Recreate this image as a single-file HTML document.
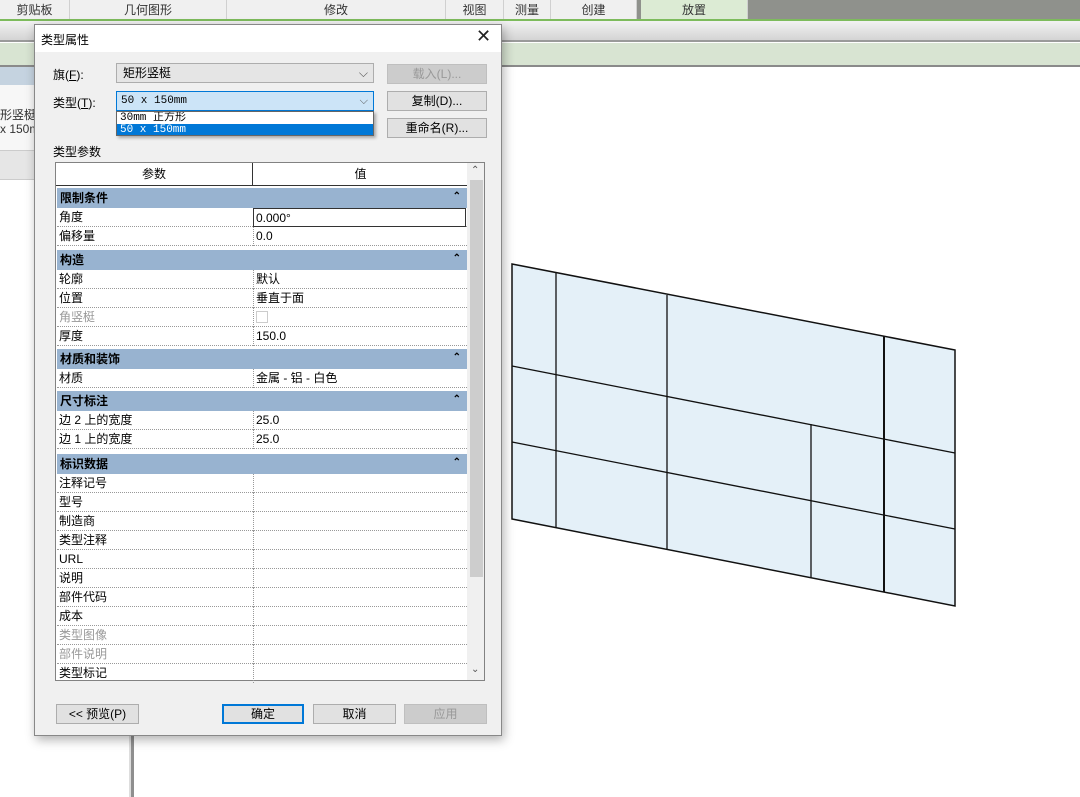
<!DOCTYPE html>
<html><head><meta charset="utf-8"><style>
*{box-sizing:border-box;margin:0;padding:0}
body{width:1080px;height:797px;position:relative;overflow:hidden;background:#fff;font-family:"Liberation Sans","Noto Sans CJK SC",sans-serif;font-size:12px;color:#000}
.a{position:absolute}
.tab{position:absolute;top:0;height:19px;background:#f0f0f0;border-right:1px solid #d0d0d0;text-align:center;line-height:20px;font-size:12px;color:#333}
.btn{position:absolute;height:20px;background:#e1e1e1;border:1px solid #adadad;text-align:center;line-height:18px;font-size:12px}
.g{position:absolute;left:57px;width:410px;height:20px;background:#98b3d0;font-weight:bold;line-height:20px;padding-left:3px;font-size:12px}
.g:after{content:"⌃";position:absolute;right:6px;top:-1px;font-size:10px;font-weight:bold}
.r{position:absolute;left:57px;width:410px;height:19px;background:#fff;border-bottom:1px dotted #999;line-height:19px;font-size:12px}
.r span{position:absolute;left:2px}
.r i{position:absolute;left:196px;top:0;height:19px;border-left:1px dotted #999;font-style:normal;padding-left:2px}
.dis{color:#999}
</style></head><body>
<div class="a" style="left:0;top:0;width:1080px;height:19px;background:#8f918c"></div>
<div class="tab" style="left:0;width:70px">剪贴板</div>
<div class="tab" style="left:70px;width:157px">几何图形</div>
<div class="tab" style="left:227px;width:219px">修改</div>
<div class="tab" style="left:446px;width:58px">视图</div>
<div class="tab" style="left:504px;width:47px">测量</div>
<div class="tab" style="left:551px;width:86px">创建</div>
<div class="a" style="left:637px;top:0;width:4px;height:19px;background:#8f918c"></div>
<div class="tab" style="left:641px;width:107px;background:#dcebd4">放置</div>
<div class="a" style="left:0;top:19px;width:1080px;height:2px;background:#7dbb5c"></div>
<div class="a" style="left:0;top:21px;width:1080px;height:21px;background:linear-gradient(#f2f2f2,#d4d4d4);border-bottom:2px solid #9a9a9a"></div>
<div class="a" style="left:0;top:43px;width:1080px;height:24px;background:#d8e4d2;border-bottom:2px solid #8a8a8a"></div>
<div class="a" style="left:0;top:67px;width:131px;height:18px;background:#c5d3e0"></div>
<div class="a" style="left:0;top:85px;width:131px;height:65px;background:#f7f7f7"></div>
<div class="a" style="left:0;top:106px;font-size:12px;color:#333">形竖梃</div>
<div class="a" style="left:0;top:122px;font-size:12px;color:#333">x 150m</div>
<div class="a" style="left:0;top:150px;width:131px;height:30px;background:#e6e6e6;border-top:1px solid #ccc;border-bottom:1px solid #ccc"></div>
<div class="a" style="left:129px;top:67px;width:2px;height:730px;background:#ddd"></div>
<div class="a" style="left:131px;top:67px;width:3px;height:730px;background:#8f8f8f"></div>
<svg class="a" style="left:0;top:0" width="1080" height="797">
<polygon points="512,264 955,350 955,606 512,519" fill="#e4f0f8" stroke="#111" stroke-width="1.5"/>
<g stroke="#111" stroke-width="1.3" fill="none">
<line x1="512" y1="366" x2="955" y2="453"/>
<line x1="512" y1="442" x2="955" y2="529"/>
<line x1="556" y1="273" x2="556" y2="528"/>
<line x1="667" y1="295" x2="667" y2="549"/>
<line x1="811" y1="424" x2="811" y2="578"/>
<line x1="884" y1="336" x2="884" y2="592" stroke-width="2"/>
</g></svg>
<div class="a" style="left:34px;top:24px;width:468px;height:712px;background:#f0f0f0;border:1px solid #888;box-shadow:2px 4px 10px rgba(0,0,0,.3)"></div>
<div class="a" style="left:35px;top:25px;width:466px;height:27px;background:#fff"></div>
<div class="a" style="left:41px;top:31px;font-size:12px">类型属性</div>
<div class="a" style="left:476px;top:26px;font-size:18px;color:#222">✕</div>
<div class="a" style="left:53px;top:66px">旗(<u>F</u>):</div>
<div class="a" style="left:53px;top:94px">类型(<u>T</u>):</div>
<div class="a" style="left:116px;top:63px;width:258px;height:20px;background:#e5e5e5;border:1px solid #adadad;line-height:18px;padding-left:6px">矩形竖梃<span style="position:absolute;right:5px;color:#555">⌵</span></div>
<div class="a" style="left:116px;top:91px;width:258px;height:20px;background:#cce4f7;border:1px solid #0078d7;line-height:18px;padding-left:4px;font-family:'Liberation Mono',monospace;font-size:11px">50 x 150mm<span style="position:absolute;right:5px;color:#555;font-family:'Liberation Sans'">⌵</span></div>
<div class="a" style="left:116px;top:111px;width:258px;height:25px;background:#fff;border:1px solid #666;box-shadow:2px 2px 3px rgba(0,0,0,.3);overflow:hidden">
<div style="position:absolute;left:3px;top:0;height:12px;font-family:'Liberation Mono','Noto Sans CJK SC',monospace;font-size:11px;line-height:12px;white-space:nowrap">30mm 正方形</div>
<div style="position:absolute;left:0;top:12px;width:256px;height:12px;background:#0078d7;color:#fff;font-family:'Liberation Mono',monospace;font-size:11px;line-height:12px;padding-left:3px">50 x 150mm</div>
</div>
<div class="btn" style="left:387px;top:64px;width:100px;color:#999;background:#ccc;border-color:#bfbfbf">载入(L)...</div>
<div class="btn" style="left:387px;top:91px;width:100px">复制(D)...</div>
<div class="btn" style="left:387px;top:118px;width:100px">重命名(R)...</div>
<div class="a" style="left:53px;top:143px">类型参数</div>
<div class="a" style="left:55px;top:162px;width:430px;height:519px;background:#fff;border:1px solid #828282"></div>
<div class="a" style="left:56px;top:163px;width:411px;height:23px;background:#fff;border-bottom:1px solid #333"></div>
<div class="a" style="left:56px;top:163px;width:197px;height:23px;border-right:1px solid #333;text-align:center;line-height:22px">参数</div>
<div class="a" style="left:254px;top:163px;width:213px;height:23px;text-align:center;line-height:22px">值</div>
<div class="a" style="left:467px;top:163px;width:17px;height:517px;background:#f0f0f0"></div>
<div class="a" style="left:470px;top:180px;width:13px;height:397px;background:#cdcdcd"></div>
<div class="a" style="left:471px;top:165px;font-size:10px;color:#555">⌃</div>
<div class="a" style="left:471px;top:664px;font-size:10px;color:#555">⌄</div>
<div class="g" style="top:188px">限制条件</div>
<div class="r" style="top:208px"><span>角度</span><i style="border:1px solid #333;width:213px;left:196px">0.000°</i></div>
<div class="r" style="top:227px"><span>偏移量</span><i>0.0</i></div>
<div class="g" style="top:250px">构造</div>
<div class="r" style="top:270px"><span>轮廓</span><i>默认</i></div>
<div class="r" style="top:289px"><span>位置</span><i>垂直于面</i></div>
<div class="r" style="top:308px"><span class="dis">角竖梃</span><i><b style="display:inline-block;width:12px;height:12px;border:1px solid #ccc;margin-top:3px"></b></i></div>
<div class="r" style="top:327px"><span>厚度</span><i>150.0</i></div>
<div class="g" style="top:349px">材质和装饰</div>
<div class="r" style="top:369px"><span>材质</span><i>金属 - 铝 - 白色</i></div>
<div class="g" style="top:391px">尺寸标注</div>
<div class="r" style="top:411px"><span>边 2 上的宽度</span><i>25.0</i></div>
<div class="r" style="top:430px"><span>边 1 上的宽度</span><i>25.0</i></div>
<div class="g" style="top:454px">标识数据</div>
<div class="r" style="top:474px"><span>注释记号</span><i></i></div>
<div class="r" style="top:493px"><span>型号</span><i></i></div>
<div class="r" style="top:512px"><span>制造商</span><i></i></div>
<div class="r" style="top:531px"><span>类型注释</span><i></i></div>
<div class="r" style="top:550px"><span>URL</span><i></i></div>
<div class="r" style="top:569px"><span>说明</span><i></i></div>
<div class="r" style="top:588px"><span>部件代码</span><i></i></div>
<div class="r" style="top:607px"><span>成本</span><i></i></div>
<div class="r" style="top:626px"><span class="dis">类型图像</span><i></i></div>
<div class="r" style="top:645px"><span class="dis">部件说明</span><i></i></div>
<div class="r" style="top:664px;height:16px;border:none"><span>类型标记</span><i></i></div>
<div class="btn" style="left:56px;top:704px;width:83px">&lt;&lt; 预览(P)</div>
<div class="btn" style="left:222px;top:704px;width:82px;border:2px solid #0078d7;line-height:16px">确定</div>
<div class="btn" style="left:313px;top:704px;width:83px">取消</div>
<div class="btn" style="left:404px;top:704px;width:83px;color:#999;background:#ccc;border-color:#bfbfbf">应用</div>
</body></html>
